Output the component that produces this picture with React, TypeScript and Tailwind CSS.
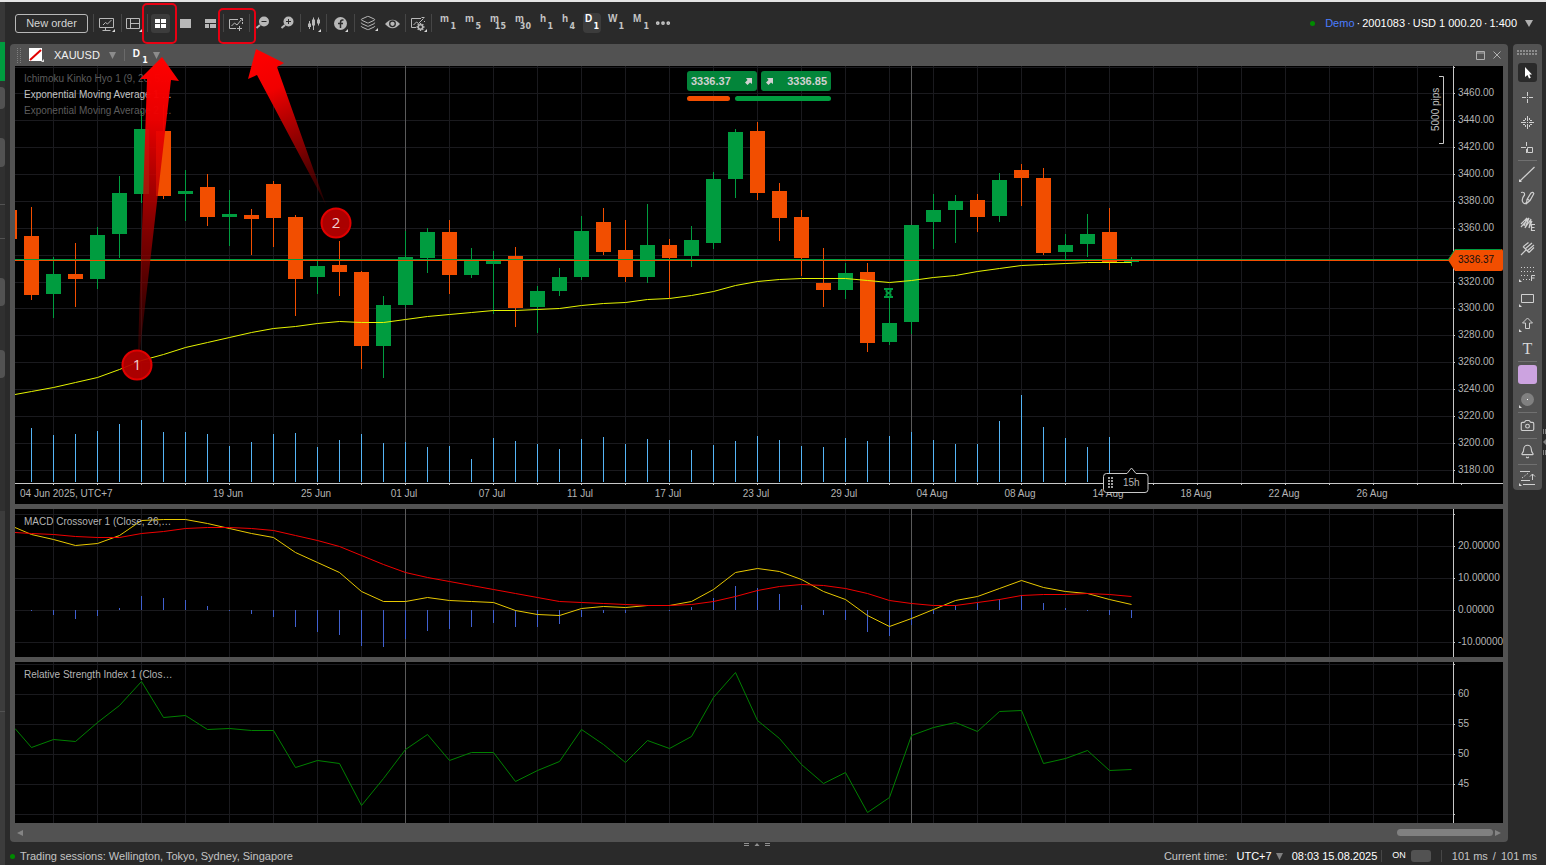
import type { ReactNode } from 'react';
import { Bell, Camera, Layers, MoreHorizontal } from 'lucide-react';
import clsx from 'clsx';

type Candle = [up: boolean, top: number, bottom: number, high: number, low: number];

const STEP = 22;
const FIRST_X = 31;
const cx = (i: number) => FIRST_X + i * STEP;

const candles: Candle[] = [
  [false, 236, 295, 207, 300],
  [true, 274, 294, 257, 318],
  [false, 274, 279, 243, 307],
  [true, 235, 279, 227, 289],
  [true, 193, 234, 176, 258],
  [true, 129, 194, 111, 203],
  [false, 131, 196, 105, 199],
  [true, 191, 194, 170, 221],
  [false, 187, 217, 174, 226],
  [true, 214, 217, 190, 246],
  [false, 215, 219, 209, 255],
  [false, 184, 218, 181, 247],
  [false, 217, 279, 215, 316],
  [true, 266, 277, 261, 294],
  [false, 265, 272, 241, 296],
  [false, 272, 346, 271, 369],
  [true, 305, 346, 296, 378],
  [true, 257, 305, 231, 307],
  [true, 232, 258, 228, 273],
  [false, 232, 275, 220, 294],
  [true, 261, 275, 248, 278],
  [true, 261, 264, 251, 314],
  [false, 256, 308, 247, 327],
  [true, 291, 307, 286, 333],
  [true, 277, 291, 268, 296],
  [true, 231, 277, 216, 280],
  [false, 222, 252, 208, 255],
  [false, 250, 277, 220, 282],
  [true, 245, 277, 204, 283],
  [false, 245, 258, 239, 298],
  [true, 240, 256, 226, 267],
  [true, 179, 243, 172, 249],
  [true, 132, 179, 129, 198],
  [false, 131, 193, 122, 200],
  [false, 191, 218, 183, 241],
  [false, 217, 258, 210, 276],
  [false, 283, 290, 248, 307],
  [true, 273, 290, 263, 299],
  [false, 272, 343, 263, 352],
  [true, 323, 342, 296, 345],
  [true, 225, 322, 225, 334],
  [true, 210, 222, 194, 249],
  [true, 201, 210, 195, 243],
  [false, 200, 217, 194, 232],
  [true, 180, 216, 173, 222],
  [false, 170, 178, 164, 206],
  [false, 178, 253, 168, 255],
  [true, 245, 252, 234, 260],
  [true, 234, 244, 214, 257],
  [false, 232, 262, 208, 270],
  [true, 261, 262, 257, 266],
];

const volumes = [
  428, 435, 434, 431, 424, 420, 432, 432, 434, 446, 442, 434, 433, 447, 440, 434, 443, 442, 447, 446, 459, 438, 441,
  444, 449, 439, 437, 444, 439, 440, 450, 445, 441, 436, 440, 446, 447, 438, 441, 436, 432, 440, 444, 444, 421, 395,
  427, 438, 447, 437,
];

const ema = [
  391, 387, 382, 377, 369, 360, 354, 347, 342, 337, 332, 328, 326, 323, 321, 322, 322, 319, 316, 314, 312, 310, 310,
  309, 308, 305, 303, 302, 299, 298, 295, 291, 285, 281, 279, 278, 278, 278, 280, 282, 280, 277, 275, 271, 268, 265,
  264, 263, 262, 262, 262,
];

const macd = [
  534, 539, 545, 543, 535, 520, 519, 519, 523, 528, 533, 537, 552, 562, 572, 591, 601, 601, 597, 600, 601, 602, 610,
  614, 615, 608, 606, 607, 605, 605, 601, 589, 572, 568, 571, 579, 591, 599, 615, 626, 618, 609, 600, 596, 588, 580,
  587, 591, 593, 599, 604,
];

const signal = [
  533, 534, 536, 537, 537, 533, 531, 528, 527, 527, 528, 530, 535, 540, 546, 555, 564, 572, 577, 581, 585, 589, 593,
  597, 601, 602, 603, 604, 605, 605, 604, 601, 596, 590, 586, 584, 585, 588, 593, 600, 603, 605, 605, 602, 599, 595,
  594, 594, 593, 594, 596,
];

const histogram = [
  1, 5, 9, 6, -2, -14, -12, -10, -4, 1, 4, 7, 17, 22, 25, 36, 37, 29, 21, 19, 17, 13, 17, 17, 14, 7, 3, 3, 0, 1, -3,
  -12, -24, -22, -16, -5, 5, 10, 22, 26, 15, 4, -5, -7, -11, -15, -7, -2, 1, 5, 8,
];

const rsi = [
  747, 739, 741, 722, 705, 681, 717, 715, 729, 728, 730, 730, 767, 760, 763, 805, 778, 749, 734, 760, 752, 752, 781,
  770, 761, 729, 744, 762, 740, 748, 736, 697, 672, 720, 738, 764, 783, 772, 812, 797, 735, 727, 722, 731, 711, 710,
  763, 758, 750, 770, 769,
];

const priceRows = [93, 120, 147, 174, 201, 228, 255, 282, 308, 335, 362, 389, 416, 443, 470];
const dates = [
  '19 Jun', '25 Jun', '01 Jul', '07 Jul', '11 Jul', '17 Jul', '23 Jul', '29 Jul', '04 Aug', '08 Aug', '14 Aug',
  '18 Aug', '22 Aug', '26 Aug',
];
const gridX = Array.from({ length: 60 }, (_, i) => 53 + i * 44);
const monthX = [405, 911];

const GREEN = '#009c3f';
const ORANGE = '#f24e00';

const linePoints = (start: number, values: number[]) =>
  [`15,${start + 0.5}`, ...values.map((v, i) => `${cx(i) + 0.5},${v + 0.5}`)].join(' ');

/* ---------- chart panes ---------- */

const Plot = ({ top, rows, children }: { top: number; rows: number[]; children: ReactNode }) => (
  <svg className="block h-full w-full min-w-0 flex-1 overflow-hidden">
    <g shapeRendering="crispEdges">
      {rows.map((y) => (
        <rect key={y} x="0" y={y - top} width="100%" height="1" fill="#1a1a1e" />
      ))}
      {gridX.map((x) => (
        <rect key={x} x={x - 15} y="0" width="1" height="100%" fill="#1a1a1e" />
      ))}
      {monthX.map((x) => (
        <rect key={x} x={x - 15} y="0" width="1" height="100%" fill="#5a5a5a" />
      ))}
    </g>
    <g transform={`translate(-15 ${-top})`}>{children}</g>
  </svg>
);

const Axis = ({
  top,
  rows,
  labels,
  children,
}: {
  top: number;
  rows: number[];
  labels: Record<number, string>;
  children?: ReactNode;
}) => (
  <svg className="relative block h-full w-[50px] shrink-0 overflow-visible" fontSize="10" fill="#b4b4b4">
    <rect width="1" height="100%" fill="#c8c8c8" />
    {rows.map((y) => (
      <g key={y}>
        <rect x="1" y={y - top} width="1" height="1" fill="#c8c8c8" />
        {labels[y] && (
          <text x="5" y={y - top + 3}>
            {labels[y]}
          </text>
        )}
      </g>
    ))}
    {children}
  </svg>
);

const priceLabels: Record<number, string> = {};
priceRows.forEach((y, i) => {
  if (y !== 255) priceLabels[y] = `${3460 - i * 20}.00`;
});

const PricePane = () => (
  <section className="relative bg-black">
    <div className="flex h-[417px]">
      <Plot top={66} rows={[67, ...priceRows]}>
        <g shapeRendering="crispEdges">
          {volumes.map((v, i) => (
            <rect key={i} x={cx(i)} y={v} width="1" height={482 - v} fill="#55b4f5" />
          ))}
          <rect x="15" y="210" width="2" height="29" fill={ORANGE} />
          {candles.map(([up, top, bottom, high, low], i) => (
            <g key={i} fill={up ? GREEN : ORANGE}>
              <rect x={cx(i)} y={high} width="1" height={low - high} />
              <rect x={cx(i) - 7} y={top} width="15" height={bottom - top} />
            </g>
          ))}
          <rect x="15" y="259" width="100%" height="1" fill={GREEN} />
          <rect x="15" y="260" width="100%" height="1" fill={ORANGE} />
        </g>
        <polyline points={linePoints(394, ema)} fill="none" stroke="#e6f500" />
        {/* expiry marker */}
        <path
          d="M884 289h9M884 297h9M886.500 289v2.500l1.500 1.500-1.500 1.500v2.500M890.500 289v2.500l-1.500 1.500 1.500 1.500v2.500"
          fill="none"
          stroke={GREEN}
          strokeWidth="2"
        />
      </Plot>
      <Axis top={66} rows={[67, ...priceRows]} labels={priceLabels}>
        <path d="M-5 194L2 183H48a2 2 0 0 1 2 2v18a2 2 0 0 1-2 2H2z" fill={ORANGE} />
        <path d="M-5 194L2 183.500H48" fill="none" stroke={GREEN} />
        <text x="5" y="197" fill="#111">
          3336.37
        </text>
      </Axis>
    </div>

    <div className="relative flex h-[21px] overflow-hidden border-t border-[#c8c8c8] text-[10px] leading-[19px] text-[#b4b4b4]">
      <svg className="absolute inset-0 h-full w-full">
        {gridX.map((x) => (
          <rect key={x} x={x - 15} y="0" width="1" height="1" fill="#c8c8c8" />
        ))}
      </svg>
      <span className="w-[169px] shrink-0 pl-[5px]">04 Jun 2025, UTC+7</span>
      {dates.map((d) => (
        <span key={d} className="w-[88px] shrink-0 text-center">
          {d}
        </span>
      ))}
    </div>

    <ul className="absolute top-[5px] left-[9px] text-[10px] leading-4">
      <li className="text-[#5c5c5c]">Ichimoku Kinko Hyo 1 (9, 26, 5…</li>
      <li className="text-[#c4c4c4]">Exponential Moving Average 1 …</li>
      <li className="text-[#5c5c5c]">Exponential Moving Average 2 …</li>
    </ul>

    <div className="absolute top-[5px] left-1/2 w-36 -translate-x-1/2">
      <div className="flex justify-between text-[11px] font-bold text-[#d0d0d0]">
        <button className="flex h-5 w-[70px] items-center justify-between rounded-[3px] bg-[#03853a] pr-[5px] pl-1">
          3336.37
          <DealArrow />
        </button>
        <button className="flex h-5 w-[70px] items-center justify-between rounded-[3px] bg-[#03853a] pr-1 pl-[5px]">
          <DealArrow />
          3336.85
        </button>
      </div>
      <div className="mt-[5px] flex gap-[5px]">
        <span className="h-[5px] w-[43px] rounded-full bg-[#f24e00]" />
        <span className="h-[5px] flex-1 rounded-full bg-[#009c3f]" />
      </div>
    </div>

    {/* scale ruler */}
    <svg className="absolute top-2 right-[58px]" width="16" height="72" fill="none" stroke="#c8c8c8">
      <path d="M10 2.500h4.500v67h-4.500" />
      <text transform="translate(10 57) rotate(-90)" fontSize="10" fill="#c0c0c0" stroke="none">
        5000 pips
      </text>
    </svg>

    {/* time left in the current bar */}
    <svg className="absolute top-[400px] left-[1088px]" width="47" height="28">
      <path
        d="M3.500 7.500H24l4.500-5.500 4.500 5.500h9a3 3 0 0 1 3 3v13a3 3 0 0 1-3 3h-38.500a3 3 0 0 1-3-3v-13a3 3 0 0 1 3-3z"
        fill="#000"
        stroke="#c8c8c8"
      />
      {[12, 15, 18, 21].map((y) => (
        <path key={y} d={`M5 ${y}h2m1 0h2`} stroke="#a0a0a0" strokeWidth="2" />
      ))}
      <text x="20" y="20" fontSize="10" fill="#b4b4b4">
        15h
      </text>
    </svg>
  </section>
);

const MacdPane = () => {
  const rows = [514, 546, 578, 610, 642];
  return (
    <section className="relative flex h-[148px] bg-black">
      <Plot top={509} rows={rows}>
        <g shapeRendering="crispEdges" fill="#4060d0">
          {histogram.map((h, i) => (
            <rect key={i} x={cx(i)} y={h < 0 ? 610 + h : 610} width="1" height={Math.abs(h)} />
          ))}
        </g>
        <polyline points={linePoints(527, macd)} fill="none" stroke="#e8c800" />
        <polyline points={linePoints(532, signal)} fill="none" stroke="#f00000" />
      </Plot>
      <Axis
        top={509}
        rows={rows}
        labels={{ 546: '20.00000', 578: '10.00000', 610: '0.00000', 642: '-10.00000' }}
      />
      <h2 className="absolute top-[5px] left-[9px] text-[10px] leading-4 text-[#b4b4b4]">
        MACD Crossover 1 (Close, 26,…
      </h2>
    </section>
  );
};

const RsiPane = () => {
  const rows = [664, 694, 724, 754, 784, 814];
  return (
    <section className="relative flex min-h-[161px] flex-1 bg-black">
      <Plot top={662} rows={rows}>
        <polyline points={linePoints(728, rsi)} fill="none" stroke="#008000" />
      </Plot>
      <Axis top={662} rows={rows} labels={{ 694: '60', 724: '55', 754: '50', 784: '45' }} />
      <h2 className="absolute top-[5px] left-[9px] text-[10px] leading-4 text-[#b4b4b4]">
        Relative Strength Index 1 (Clos…
      </h2>
    </section>
  );
};

/* ---------- small pieces ---------- */

const DealArrow = () => (
  <svg width="7" height="7" viewBox="0 0 7 7" fill="#d0d0d0">
    <path d="M1 0h6v6L5 4.500 2.500 7 0 4.500 2.500 2z" />
  </svg>
);

const Caret = ({ className, size = 8 }: { className?: string; size?: number }) => (
  <svg className={className} width={size} height="7" viewBox="0 0 8 7" preserveAspectRatio="none" fill="currentColor">
    <path d="M0 0h8L4 7z" />
  </svg>
);

const Divider = () => <span className="h-[18px] w-px shrink-0 bg-[#464646]" />;

const Icon = ({
  label,
  wide,
  active,
  children,
}: {
  label: string;
  wide?: boolean;
  active?: boolean;
  children: ReactNode;
}) => (
  <button
    aria-label={label}
    className={clsx('flex h-6 shrink-0 items-center justify-center text-[#b8b8b8]', wide ? 'w-[27px]' : 'w-[25px]')}
  >
    <svg width="25" height="24" viewBox="0 0 25 24" fill="none" stroke="currentColor">
      {active && <rect x="3" y="3" width="19" height="19" rx="3" fill="#3c3c3c" stroke="none" />}
      {children}
    </svg>
  </button>
);

const Corner = ({ x = 20, y = 21 }: { x?: number; y?: number }) => (
  <path d={`M${x} ${y}v-3l-3 3z`} fill="#d8d8d8" stroke="none" />
);

const Timeframe = ({ unit, n, active, narrow }: { unit: string; n: string; active?: boolean; narrow?: boolean }) => (
  <button
    className={clsx(
      'relative flex h-5 shrink-0 rounded font-bold',
      narrow ? 'mx-px w-5' : active ? 'mx-[3px] w-[18px]' : 'mx-px w-[23px]',
      active ? 'bg-[#3c3c3c] px-[2px] text-white' : 'px-[3px] text-[#c4c4c4]',
    )}
  >
    <span className="text-[10px] leading-[11px]">{unit}</span>
    <span
      className={clsx(
        "absolute bottom-0 font-['DejaVu_Sans'] text-[8px] leading-[13px]",
        active ? 'right-[2px]' : 'right-1',
      )}
    >
      {n}
    </span>
  </button>
);

const Toolbar = () => (
  <header className="flex h-[42px] items-center pr-[13px] pl-[10px]">
    <button className="mr-[5px] h-[19px] w-[73px] shrink-0 rounded-[3px] border border-[#b8b8b8] text-[11px] leading-none whitespace-nowrap text-[#d4d4d4]">
      New order
    </button>
    <Divider />
    <Icon label="Workspace" wide>
      <path d="M4.500 7.500h14v9h-14zM10.500 17v2.500M7.500 19.500h8M8 14l2.500-2.500 2 1.500 4-4" />
      <Corner />
    </Icon>
    <Divider />
    <Icon label="Panels">
      <path d="M4.500 7.500h13v10h-13zM8.500 7.500v10M8.500 12.500h9" />
      <Corner />
    </Icon>
    <Divider />
    <Icon label="Multi-chart mode" active>
      <path d="M7 8h5v4H7zM13 8h5v4h-5zM7 13h5v4H7zM13 13h5v4h-5z" fill="#fff" stroke="none" />
    </Icon>
    <Icon label="Single-chart mode">
      <path d="M7 8h11v9H7z" fill="currentColor" stroke="none" />
    </Icon>
    <Icon label="Free-chart mode">
      <path d="M7 8h11v4H7zM7 13h4v4H7zM12 13h6v4h-6z" fill="currentColor" stroke="none" />
    </Icon>
    <Divider />
    <Icon label="Indicators">
      <path d="M12 17.500H5.500v-9H14M18.500 11v2M7.500 15l3-3 2.500 2 4.500-5.500M16 7.500h2.500V10M15.500 15v5M13 17.500h5" />
    </Icon>
    <Divider />
    <Icon label="Zoom out">
      <path d="M10 14l-3.500 3" strokeWidth="2" />
      <circle cx="14" cy="10.500" r="5" fill="currentColor" stroke="none" />
      <path d="M11.500 10.500h5" stroke="#2a2a2a" />
    </Icon>
    <Icon label="Zoom in">
      <path d="M10 14l-3.500 3" strokeWidth="2" />
      <circle cx="13.500" cy="10.500" r="5" fill="currentColor" stroke="none" />
      <path d="M11 10.500h5M13.500 8v5" stroke="#2a2a2a" />
    </Icon>
    <Divider />
    <Icon label="Chart type">
      <path d="M8.500 10v8M12.500 6.500V19M17.500 6.500v8" />
      <path d="M7 12.500h3v3.500H7zM11 8.500h3v6h-3zM16 8.500h3v4h-3z" fill="currentColor" stroke="none" />
      <Corner />
    </Icon>
    <Divider />
    <Icon label="Indicators list" wide>
      <circle cx="12.500" cy="12.500" r="6.500" fill="currentColor" stroke="none" />
      <path d="M15.500 9h-1q-2 0-2 2.500V17M10 12.500h5" stroke="#2a2a2a" strokeWidth="1.500" />
      <Corner />
    </Icon>
    <Divider />
    <button aria-label="Objects" className="relative flex h-6 w-[25px] shrink-0 items-center justify-center text-[#b8b8b8]">
      <Layers size={16} strokeWidth={1.5} />
      <svg className="absolute right-[2px] bottom-1" width="3" height="3">
        <path d="M3 0v3H0z" fill="#d8d8d8" />
      </svg>
    </button>
    <Icon label="View options">
      <path d="M5 13q7.500-8.500 15 0-7.500 8.500-15 0z" fill="currentColor" stroke="none" />
      <circle cx="12.500" cy="12.800" r="2.800" stroke="#2a2a2a" strokeWidth="1.300" />
    </Icon>
    <Divider />
    <Icon label="Chart settings">
      <path d="M10 16.500H5.500v-9H15M18.500 10v1M7.500 14l3-3 2 1.500 5-5M15.500 6.500h3" />
      <path d="M14.500 12v8M10.500 16h8M11.700 13.200l5.600 5.600M17.300 13.200l-5.600 5.600" strokeWidth="1.400" />
      <circle cx="14.500" cy="16" r="2.200" fill="#2a2a2a" strokeWidth="1.500" />
      <Corner x={21} />
    </Icon>
    <Divider />
    <nav className="ml-1 flex items-center">
      <Timeframe unit="m" n="1" />
      <Timeframe unit="m" n="5" />
      <Timeframe unit="m" n="15" />
      <Timeframe unit="m" n="30" />
      <Timeframe unit="h" n="1" narrow />
      <Timeframe unit="h" n="4" narrow />
      <Timeframe unit="D" n="1" active />
      <Timeframe unit="W" n="1" />
      <Timeframe unit="M" n="1" />
      <button aria-label="More periods" className="text-[#c8c8c8]">
        <MoreHorizontal size={18} strokeWidth={3} />
      </button>
    </nav>

    <button className="ml-auto flex items-center gap-[2px] text-[11px] whitespace-nowrap text-white">
      <span className="mr-2 size-[5px] rounded-full bg-[#008a00]" />
      <span className="text-[#4a7dff]">Demo</span>
      <span>·</span>
      <span>2001083</span>
      <span>·</span>
      <span>USD 1 000.20</span>
      <span>·</span>
      <span>1:400</span>
      <Caret className="ml-[6px] text-[#b0b0b0]" />
    </button>
  </header>
);

const TitleBar = () => (
  <div className="flex h-[22px] shrink-0 items-center">
    <svg width="5" height="15" className="ml-[6px]" stroke="#808080">
      <path d="M1.500 0v15M4.500 0v15" strokeDasharray="1 1" />
    </svg>
    <svg width="16" height="16" className="ml-2">
      <rect y="1" width="13" height="13" fill="#fff" />
      <path d="M1 13L12 3" stroke="#e00000" strokeWidth="2" />
      <path d="M15 12v3h-3z" fill="#ddd" />
    </svg>
    <button className="ml-[9px] flex items-center text-[11px] text-[#f0f0f0]">
      XAUUSD
      <Caret size={7} className="ml-[9px] text-[#8c8c8c]" />
    </button>
    <span className="ml-2 h-3 w-px bg-[#6a6a6a]" />
    <button className="relative ml-2 flex h-5 w-[15px] font-bold text-white">
      <span className="text-[10px] leading-[17px]">D</span>
      <span className="absolute right-0 bottom-0 font-['DejaVu_Sans'] text-[8px] leading-[8px]">1</span>
    </button>
    <Caret size={7} className="ml-[5px] text-[#8c8c8c]" />
    <div className="mr-[7px] ml-auto flex items-center gap-2 text-[#b0b0b0]">
      <button aria-label="Maximize">
        <svg width="9" height="9" fill="none" stroke="currentColor" className="block">
          <path d="M.5.500h8v8h-8zM0 2h9" />
        </svg>
      </button>
      <button aria-label="Close">
        <svg width="8" height="8" stroke="currentColor" className="block">
          <path d="M.5.500l7 7M7.500.500l-7 7" />
        </svg>
      </button>
    </div>
  </div>
);

/* ---------- drawing tools on the right ---------- */

const Tool = ({ label, corner, children }: { label: string; corner?: boolean; children: ReactNode }) => (
  <button aria-label={label} className="block h-[25px]">
    <svg width="25" height="25" fill="none" stroke="#d0d0d0">
      {children}
      {corner && <path d="M4 18v3h3z" fill="#d8d8d8" stroke="none" />}
    </svg>
  </button>
);

const ToolLine = () => <span className="h-px w-[19px] bg-[#707070]" />;

const ToolBox = () => (
  <aside className="flex w-[29px] shrink-0 flex-col items-center self-start rounded bg-[#525252]">
    <svg width="21" height="16" stroke="#8c8c8c" strokeWidth="2" strokeDasharray="2 1">
      <path d="M0 7h21M0 10h21" />
    </svg>
    <Tool label="Cursor">
      <rect x="3" y="3" width="19" height="19" rx="3" fill="#2a2a2a" stroke="none" />
      <path d="M10 7v10l2.500-2 1.500 3.500 1.800-.8L14.300 14.500h2.700z" fill="#fff" stroke="none" />
    </Tool>
    <Tool label="Crosshair">
      <path d="M7 12.500h4M14 12.500h4M12.500 7v4M12.500 14v4M12 12.500h1" />
    </Tool>
    <Tool label="Synchronized crosshair">
      <path d="M6 12.500h5M14 12.500h5M12.500 6v5M12.500 14v5M12 12.500h1M8 10.500h2M10.500 8v2M14.500 8v2M15 10.500h2M8 14.500h2M10.500 15v2M14.500 15v2M15 14.500h2" />
    </Tool>
    <Tool label="Ruler crosshair">
      <path d="M6 12.500h5M11.500 7v4M11.500 14v4M12.500 12.500h5v5h-5z" />
    </Tool>
    <ToolLine />
    <Tool label="Trend line" corner>
      <path d="M5 20L19.500 6" strokeWidth="1.200" />
    </Tool>
    <Tool label="Pencil">
      <path d="M6 6.500q4-1 3.500 2.500-3 3.500-2 6.500 1.500 3.500 4 1" strokeWidth="1.200" />
      <path d="M11.500 17.500l.5-4 4-6.500q2-1.500 2.800.8L15 14.500zM12.500 13l2.500 2" strokeWidth="1.200" />
    </Tool>
    <Tool label="Elliott waves">
      <path d="M6 16l8-9-4 10 6-9-2 9 3-7M6 13l6-6-3 8" strokeWidth="1.200" />
      <path d="M20 13.500h-3.500v6H20M16.500 16.500h3" strokeWidth="1.200" />
    </Tool>
    <Tool label="Pitchfork">
      <path d="M6 19l5-5M8 10.500l6 6M8.500 10.500l5-4M10 13l7-6M12 15l7-6M14 16.500l5-5" strokeWidth="1.200" />
    </Tool>
    <Tool label="Fibonacci" corner>
      <path d="M6 6.500h14M6 10.500h14M6 14.500h9M8 18.500h7" strokeDasharray="1 2" />
      <path d="M20 14.500h-3.500V20M16.500 17h3" />
    </Tool>
    <Tool label="Rectangle" corner>
      <path d="M6.500 8.500h12v8h-12z" />
    </Tool>
    <Tool label="Arrow" corner>
      <path d="M12.500 7l5 5h-3v5.500h-4V12h-3z" />
    </Tool>
    <button className="h-[25px] w-[25px] font-['Liberation_Serif'] text-base leading-[25px] text-[#d8d8d8]">T</button>
    <ToolLine />
    <div className="flex h-[25px] items-center">
      <button aria-label="Colour" className="size-[19px] rounded-[3px] bg-[#cca3e0]" />
    </div>
    <Tool label="Line width" corner>
      <circle cx="12.500" cy="12.500" r="6.500" fill="#808080" stroke="none" />
      <path d="M12 12.500h1" stroke="#fff" />
    </Tool>
    <ToolLine />
    <button aria-label="Snapshot" className="flex h-[25px] items-center text-[#d0d0d0]">
      <Camera size={15} strokeWidth={1.8} />
    </button>
    <ToolLine />
    <button aria-label="Alerts" className="flex h-[25px] items-center text-[#d0d0d0]">
      <Bell size={15} strokeWidth={1.8} />
    </button>
    <ToolLine />
    <Tool label="Order levels" corner>
      <path d="M5 6.500h10M8 19.500h12M6 15.500h9" />
      <path d="M7 13L14 7.500" strokeDasharray="1.500 1.500" />
      <path d="M17.500 15V9M15 11.500l2.500-2.500 2.500 2.500" />
    </Tool>
  </aside>
);

/* ---------- page edges ---------- */

const LeftEdge = () => (
  <div className="flex w-[5px] shrink-0 flex-col bg-[#303030]">
    <span className="h-10 bg-[#383838]" />
    <span className="mb-1.5 h-[39px] bg-[#009c3f]" />
    <span className="mb-[29px] h-[22px] rounded-r bg-[#525252]" />
    <span className="mb-[37px] h-[29px] rounded-r bg-[#525252]" />
    <span className="mb-[33px] h-px bg-[#525252]" />
    <span className="mb-[39px] h-px bg-[#525252]" />
    <span className="mb-11 h-7 rounded-r bg-[#525252]" />
    <span className="mb-[133px] h-7 rounded-r bg-[#525252]" />
    <div className="flex-1 bg-[#3c3c3c] pt-[200px]">
      <div className="h-px bg-[#525252]" />
    </div>
  </div>
);

const StatusBar = () => (
  <footer className="relative flex h-[23px] items-center pt-[5px] pr-[9px] pl-[5px] text-[11px] whitespace-nowrap text-[#c4c4c4]">
    <svg className="absolute top-0 left-1/2 -ml-8" width="26" height="5" stroke="#909090">
      <path d="M0 1.500h5M0 3.500h5M21 1.500h5M21 3.500h5" />
      <path d="M13 1l2.500 3h-5z" fill="#909090" stroke="none" />
    </svg>
    <span className="mr-[5px] size-[5px] rounded-full bg-[#008a00]" />
    <p>Trading sessions: Wellington, Tokyo, Sydney, Singapore</p>
    <span className="ml-auto">Current time:</span>
    <button className="ml-[9px] flex items-center text-white">
      UTC+7
      <Caret size={7} className="ml-1 text-[#808080]" />
    </button>
    <span className="ml-[9px] text-white">08:03 15.08.2025</span>
    <span className="mx-1 h-3 w-px bg-[#464646]" />
    <label className="ml-[6px] flex items-center gap-[5px] text-[9px] text-white">
      ON
      <input type="checkbox" defaultChecked className="h-3 w-5 appearance-none rounded-[3px] bg-[#525252]" />
    </label>
    <span className="mx-[10px] h-3 w-px bg-[#464646]" />
    <span className="flex gap-[5px]">
      <span>101 ms</span>
      <span>/</span>
      <span>101 ms</span>
    </span>
  </footer>
);

const Annotations = () => (
  <svg className="pointer-events-none absolute inset-0 h-full w-full" fontFamily="Open Sans" fontSize="15">
    <defs>
      <linearGradient id="fade1" gradientUnits="userSpaceOnUse" x1="160" y1="57" x2="138" y2="352">
        <stop offset="0" stopColor="#ff0000" />
        <stop offset="0.220" stopColor="#f00000" stopOpacity="0.960" />
        <stop offset="0.650" stopColor="#980000" stopOpacity="0.750" />
        <stop offset="1" stopColor="#700000" stopOpacity="0.300" />
      </linearGradient>
      <linearGradient id="fade2" gradientUnits="userSpaceOnUse" x1="258" y1="50" x2="326" y2="206">
        <stop offset="0" stopColor="#ff0000" />
        <stop offset="0.250" stopColor="#f00000" />
        <stop offset="0.650" stopColor="#900000" stopOpacity="0.850" />
        <stop offset="1" stopColor="#600000" stopOpacity="0.300" />
      </linearGradient>
    </defs>
    <g fill="none" stroke="#e80012" strokeWidth="2">
      <rect x="143" y="4" width="33" height="39" rx="4" />
      <rect x="219" y="9" width="36" height="34" rx="4" />
    </g>
    <path d="M162 57l17 24-8-1L140 350h-2L147 79l-7 0z" fill="url(#fade1)" />
    <path d="M256 49l28 14-7 4L326 205 257 75l-9 4z" fill="url(#fade2)" />
    <g fill="#b80000" fillOpacity="0.930" stroke="#e00000" strokeWidth="2">
      <circle cx="137" cy="365" r="14.500" />
      <circle cx="336" cy="223" r="14.500" />
    </g>
    <g fill="#f0d0d0" textAnchor="middle">
      <text x="137" y="370">
        1
      </text>
      <text x="336" y="228">
        2
      </text>
    </g>
  </svg>
);

const App = () => (
  <div className="relative flex min-h-screen flex-col overflow-hidden bg-[#2a2a2a] font-['Liberation_Sans',Arial,sans-serif]">
    <div className="h-[2px] bg-[#e4e4e4]" />
    <div className="flex flex-1">
      <LeftEdge />
      <div className="flex min-w-0 flex-1 flex-col">
        <Toolbar />
        <div className="flex flex-1 gap-[5px] pr-1 pl-[5px]">
          <main className="flex min-w-0 flex-1 flex-col rounded bg-[#525252]">
            <TitleBar />
            <div className="flex flex-1 flex-col gap-[5px] px-[5px]">
              <PricePane />
              <MacdPane />
              <RsiPane />
            </div>
            <div className="flex h-[19px] shrink-0 items-center justify-between px-[7px] text-[#848484]">
              <svg width="6" height="6" fill="currentColor">
                <path d="M6 0v6L0 3z" />
              </svg>
              <div className="flex items-center gap-[2px]">
                <span className="h-[7px] w-24 rounded-full bg-[#808080]" />
                <svg width="6" height="6" fill="currentColor">
                  <path d="M0 0v6l6-3z" />
                </svg>
              </div>
            </div>
          </main>
          <ToolBox />
        </div>
        <StatusBar />
      </div>
    </div>
    <svg className="absolute top-[429px] right-0" width="3" height="26" stroke="#808080">
      <path d="M.5 0v5M2.500 0v5M.5 21v5M2.500 21v5" />
      <path d="M3 10v6L0 13z" fill="#808080" stroke="none" />
    </svg>
    <Annotations />
  </div>
);

export default App;
